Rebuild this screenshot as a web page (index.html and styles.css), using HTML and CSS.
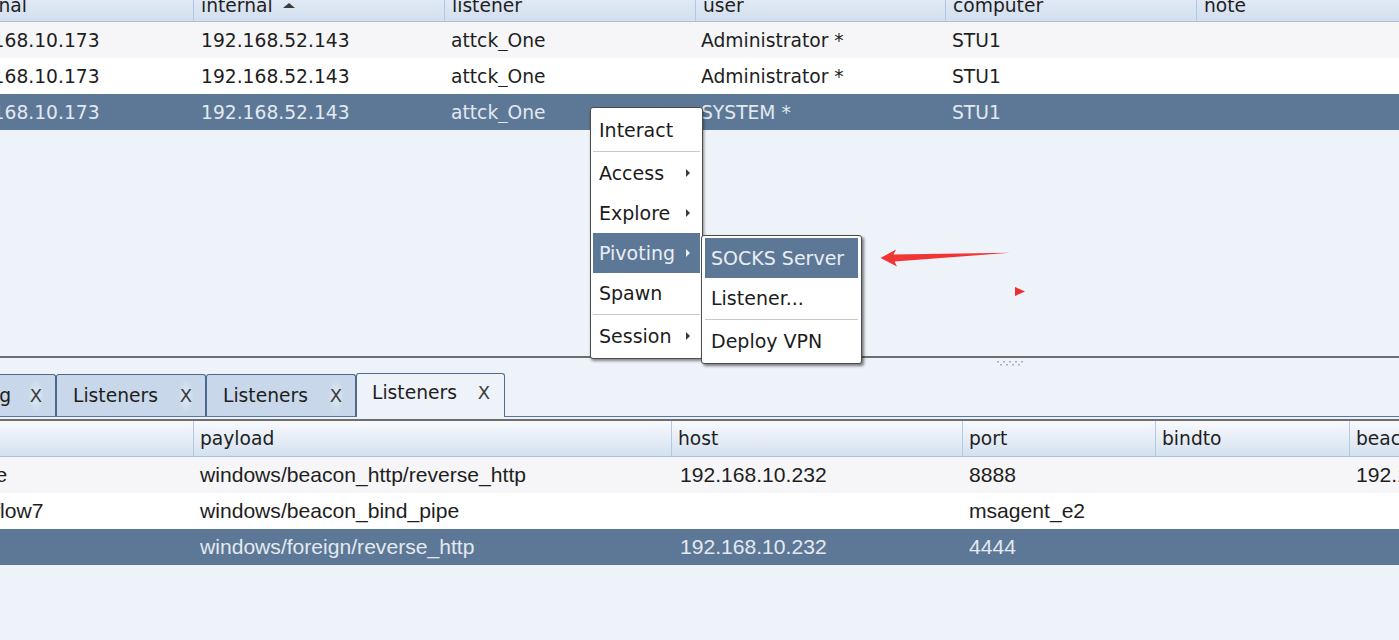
FILE: index.html
```html
<!DOCTYPE html>
<html>
<head>
<meta charset="utf-8">
<link rel="stylesheet" href="styles.css">
</head>
<body>
<div class="app">
  <section class="pane-top">
    <div class="view-top">
      <div class="grid-top head-top">
        <div class="hcell first"><span>external</span></div>
        <div class="hcell"><span>internal</span><i class="sort"></i></div>
        <div class="hcell"><span>listener</span></div>
        <div class="hcell"><span>user</span></div>
        <div class="hcell"><span>computer</span></div>
        <div class="hcell"><span>note</span></div>
      </div>
      <div class="grid-top row odd">
        <div class="cell">192.168.10.173</div><div class="cell">192.168.52.143</div><div class="cell">attck_One</div><div class="cell">Administrator *</div><div class="cell">STU1</div><div class="cell"></div>
      </div>
      <div class="grid-top row even">
        <div class="cell">192.168.10.173</div><div class="cell">192.168.52.143</div><div class="cell">attck_One</div><div class="cell">Administrator *</div><div class="cell">STU1</div><div class="cell"></div>
      </div>
      <div class="grid-top row sel">
        <div class="cell">192.168.10.173</div><div class="cell">192.168.52.143</div><div class="cell">attck_One</div><div class="cell">SYSTEM *</div><div class="cell">STU1</div><div class="cell"></div>
      </div>
    </div>
  </section>

  <div class="divider">
    <svg class="grip" width="30" height="6" viewBox="0 0 30 6">
      <g fill="#9fb0c6">
        <rect x="0" y="0" width="2" height="1.5"/><rect x="6" y="0" width="2" height="1.5"/><rect x="12" y="0" width="2" height="1.5"/><rect x="18" y="0" width="2" height="1.5"/><rect x="24" y="0" width="2" height="1.5"/>
        <rect x="3" y="3" width="2" height="1.5"/><rect x="9" y="3" width="2" height="1.5"/><rect x="15" y="3" width="2" height="1.5"/><rect x="21" y="3" width="2" height="1.5"/>
      </g>
    </svg>
  </div>

  <section class="pane-bottom">
    <div class="tabstrip">
      <div class="tab t1"><span class="tlabel">Event Log</span><span class="tclose">X</span></div>
      <div class="tab"><span class="tlabel">Listeners</span><span class="tclose">X</span></div>
      <div class="tab"><span class="tlabel">Listeners</span><span class="tclose">X</span></div>
      <div class="tab active"><span class="tlabel">Listeners</span><span class="tclose">X</span></div>
    </div>
    <div class="ltable">
      <div class="view-bot">
        <div class="grid-bot head-bot">
          <div class="hcell first">name</div>
          <div class="hcell">payload</div>
          <div class="hcell">host</div>
          <div class="hcell">port</div>
          <div class="hcell">bindto</div>
          <div class="hcell">beacons</div>
        </div>
        <div class="grid-bot brow odd">
          <div class="cell">attck_One</div><div class="cell">windows/beacon_http/reverse_http</div><div class="cell">192.168.10.232</div><div class="cell">8888</div><div class="cell"></div><div class="cell">192.168.10.232</div>
        </div>
        <div class="grid-bot brow even">
          <div class="cell">smb_winflow7</div><div class="cell">windows/beacon_bind_pipe</div><div class="cell"></div><div class="cell">msagent_e2</div><div class="cell"></div><div class="cell"></div>
        </div>
        <div class="grid-bot brow sel">
          <div class="cell">a</div><div class="cell">windows/foreign/reverse_http</div><div class="cell">192.168.10.232</div><div class="cell">4444</div><div class="cell"></div><div class="cell"></div>
        </div>
      </div>
    </div>
  </section>

  <div class="menu main-menu">
    <div class="mi">Interact</div>
    <div class="sep"></div>
    <div class="mi">Access<i class="arr"></i></div>
    <div class="mi">Explore<i class="arr"></i></div>
    <div class="mi hl">Pivoting<i class="arr"></i></div>
    <div class="mi">Spawn</div>
    <div class="sep"></div>
    <div class="mi">Session<i class="arr"></i></div>
  </div>

  <div class="menu sub-menu">
    <div class="mi hl">SOCKS Server</div>
    <div class="mi">Listener...</div>
    <div class="sep"></div>
    <div class="mi">Deploy VPN</div>
  </div>

  <svg class="annot" width="160" height="70" viewBox="870 240 160 70">
    <path d="M880.5,258 L896,249.5 L893.5,254.5 L1010,252.8 L894.5,261.5 L897,266.5 Z" fill="#f23434"/>
    <path d="M1015,287 L1025,291.5 L1015,296 Z" fill="#ef2d2d"/>
  </svg>
</div>
</body>
</html>
```

FILE: styles.css
```css
html, body {
  margin: 0;
  padding: 0;
}
body {
  width: 1399px;
  height: 640px;
  overflow: hidden;
  background: #eef2f9;
  font-family: "DejaVu Sans", sans-serif;
  color: #1e1e1e;
}
.app {
  position: relative;
  width: 1399px;
  height: 640px;
  display: flex;
  flex-direction: column;
  overflow: hidden;
}

/* ---------- top table ---------- */
.pane-top {
  height: 356px;
  overflow: hidden;
  flex: none;
}
.view-top {
  margin-left: -58px;
}
.grid-top {
  display: grid;
  grid-template-columns: 251px 251px 251px 250px 251px 1fr;
}
.head-top {
  height: 21px;
  border-bottom: 1px solid #a8c0dc;
  background: linear-gradient(#e0e9f5, #d3dfee);
  overflow: hidden;
}
.hcell {
  border-left: 1px solid #b3c9e3;
  padding-left: 7px;
  font-size: 18.7px;
  color: #1f1f1f;
  white-space: nowrap;
  overflow: hidden;
  display: flex;
  align-items: flex-start;
}
.hcell.first {
  border-left: none;
  padding-left: 8px;
}
.head-top .hcell span {
  display: block;
  line-height: 24px;
  margin-top: -6px;
}
.sort {
  display: block;
  width: 0;
  height: 0;
  margin-left: 10px;
  margin-top: 3px;
  border-left: 6px solid transparent;
  border-right: 6px solid transparent;
  border-bottom: 5px solid #3b3b3b;
}
.row {
  height: 36px;
  align-items: center;
  font-size: 18.7px;
}
.cell {
  padding-left: 8px;
  white-space: nowrap;
  overflow: hidden;
}
.row .cell:nth-child(1) { padding-left: 9px; }
.row .cell:nth-child(3) { padding-left: 7px; }
.row .cell:nth-child(4) { padding-left: 6px; }
.row .cell:nth-child(5) { padding-left: 7px; }
.odd { background: #f6f6f8; }
.even { background: #ffffff; }
.sel { background: #5d7896; color: #e3e9f0; }

/* ---------- divider ---------- */
.divider {
  flex: none;
  height: 8px;
  border-top: 2px solid #6e6e6e;
  display: flex;
  align-items: flex-start;
  padding-left: 997px;
}
.grip {
  display: block;
  margin-top: 3px;
}

/* ---------- bottom pane ---------- */
.pane-bottom {
  flex: 1;
  display: flex;
  flex-direction: column;
  overflow: hidden;
}
.tabstrip {
  height: 50px;
  border-bottom: 1px solid #56769a;
  display: flex;
  align-items: flex-end;
  margin-left: -101px;
}
.tab {
  box-sizing: border-box;
  width: 150px;
  height: 42px;
  background: #c8d8ea;
  border: 1px solid #4b6a8b;
  border-bottom: none;
  border-radius: 3px 3px 0 0;
  display: flex;
  align-items: center;
  padding-left: 16px;
  font-size: 18.7px;
  color: #1e1e1e;
}
.tab.t1 {
  width: 157px;
  padding-left: 6px;
}
.tab.t1 .tlabel {
  flex: 1;
  text-align: right;
}
.tab.active {
  width: 149px;
  height: 44px;
  margin-bottom: -1px;
  background: #eef2f9;
  padding-left: 15px;
  padding-bottom: 6px;
  border-color: #4e6d8e;
}
.tlabel {
  white-space: nowrap;
}
.tclose {
  margin-left: auto;
  margin-right: 11px;
  width: 16px;
  height: 34px;
  display: flex;
  align-items: center;
  justify-content: center;
  color: #3d3d3d;
  font-size: 18px;
  background: radial-gradient(ellipse at center, rgba(235, 242, 250, 0.75) 0%, rgba(235, 242, 250, 0) 70%);
}
.tab.active .tclose {
  background: none;
  height: auto;
  margin-right: 12px;
}
.tab.t1 .tclose {
  margin-left: 17px;
}

.ltable {
  margin-top: 2px;
  border-top: 2px solid #6e6e6e;
  overflow: hidden;
}
.view-bot {
  margin-left: -96px;
}
.grid-bot {
  display: grid;
  grid-template-columns: 289px 478px 291px 193px 194px 1fr;
}
.head-bot {
  height: 35px;
  border-bottom: 1px solid #a6c1de;
  background: linear-gradient(#f8fafd, #d4e0ef);
}
.head-bot .hcell {
  padding-left: 6px;
  line-height: 35px;
  align-items: center;
}
.head-bot .hcell.first {
  padding-left: 7px;
}
.brow {
  height: 36px;
  align-items: center;
  font-family: "Liberation Sans", Arial, sans-serif;
  font-size: 21.1px;
}
.brow .cell {
  padding-left: 7px;
}
.brow .cell:nth-child(3) {
  padding-left: 9px;
}

/* ---------- popup menus ---------- */
.menu {
  position: absolute;
  box-sizing: border-box;
  background: #ffffff;
  border: 1px solid #4c4c4c;
  border-radius: 3px;
  box-shadow: 1px 2px 3px rgba(0, 0, 0, 0.45);
  padding: 2px;
  font-size: 19px;
  color: #1c1c1c;
}
.main-menu {
  left: 590px;
  top: 107px;
  width: 113px;
}
.sub-menu {
  left: 701px;
  top: 235px;
  width: 161px;
  padding: 2px 3px;
  box-shadow: 2px 2px 3px rgba(0, 0, 0, 0.5);
}
.mi {
  height: 40px;
  display: flex;
  align-items: center;
  padding-left: 6px;
  padding-right: 10px;
  white-space: nowrap;
}
.mi.hl {
  background: #5d7896;
  color: #e8eef4;
}
.arr {
  display: block;
  margin-left: auto;
  width: 0;
  height: 0;
  border-left: 4px solid #3a3a3a;
  border-top: 4px solid transparent;
  border-bottom: 4px solid transparent;
}
.mi.hl .arr {
  border-left-color: #e8eef4;
}
.sep {
  height: 1px;
  margin: 1px 0;
  background: #c8c8c8;
}

.annot {
  position: absolute;
  left: 870px;
  top: 240px;
}
```
